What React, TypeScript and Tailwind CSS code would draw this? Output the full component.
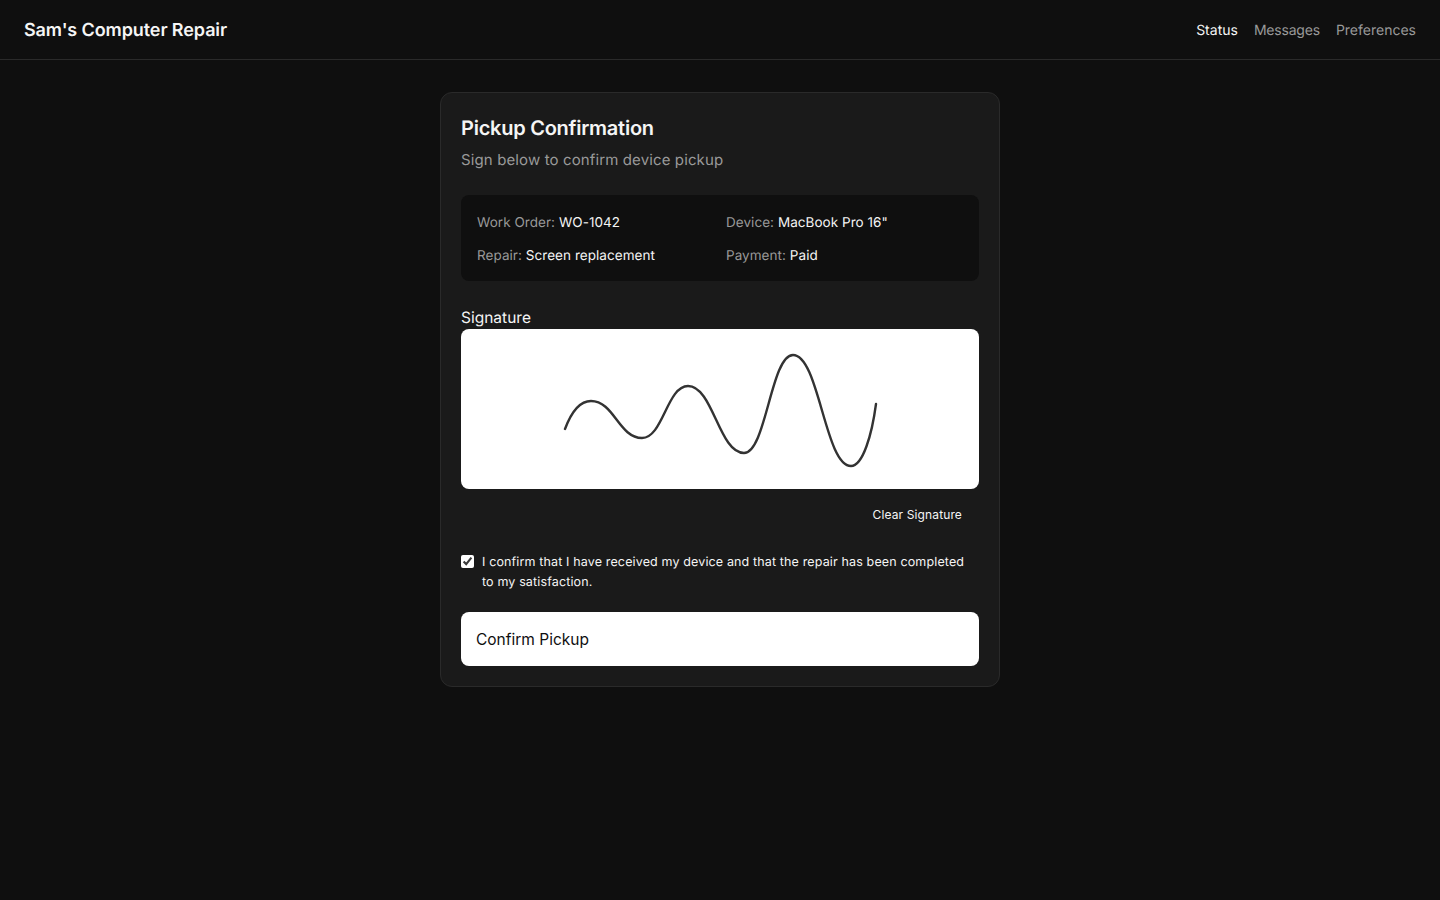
import { useState } from 'react';

const details = [
  { label: 'Work Order:', value: 'WO-1042' },
  { label: 'Device:', value: 'MacBook Pro 16"' },
  { label: 'Repair:', value: 'Screen replacement' },
  { label: 'Payment:', value: 'Paid' },
];

function Header() {
  return (
    <header className="flex h-[60px] items-center justify-between border-b border-[#2a2a2a] px-6 pt-[2px]">
      <h1 className="text-lg font-semibold tracking-[-0.1px] text-[#f5f5f5]">Sam's Computer Repair</h1>
      <nav className="flex gap-4 text-sm">
        <a className="text-[#f5f5f5]">Status</a>
        <a className="tracking-[-0.2px] text-[#999999]">Messages</a>
        <a className="text-[#999999]">Preferences</a>
      </nav>
    </header>
  );
}

function SignaturePad() {
  return (
    <div className="h-40 w-full overflow-hidden rounded-lg bg-white">
      <svg width="518" height="160" viewBox="0 0 518 160" fill="none">
        <path
          d="M104 100 C110 84 119 72 130 72 C153 72 158 109 181 109 C202 109 206 57 227 57 C252 57 258 124 283 124 C305 124 310 26 332 26 C358 26 364 137 390 137 C402 137 411 105 415 75"
          stroke="#333333"
          strokeWidth="2.4"
          strokeLinecap="round"
        />
      </svg>
    </div>
  );
}

export default function App() {
  const [confirmed, setConfirmed] = useState(true);

  return (
    <div className="min-h-screen bg-[#0f0f0f] font-['Inter',sans-serif] text-[#f5f5f5] [text-rendering:geometricPrecision]">
      <Header />
      <main className="mx-auto w-[560px] pt-8">
        <div className="rounded-xl border border-[#2a2a2a] bg-[#1a1a1a] p-5">
          <h2 className="text-xl font-semibold leading-[30px] tracking-[-0.25px] text-[#f5f5f5]">Pickup Confirmation</h2>
          <p className="mt-[5px] text-[15px] leading-6 tracking-[0.12px] text-[#999999]">Sign below to confirm device pickup</p>

          <div className="mt-[23px] grid grid-cols-2 gap-3 rounded-lg bg-[#0f0f0f] px-4 pt-[18px] pb-[14px] text-[13.5px] leading-[21px] tracking-[0.05px]">
            {details.map((d) => (
              <div key={d.label}>
                <span className="text-[#999999]">{d.label}</span> {d.value}
              </div>
            ))}
          </div>

          <label className="mt-[26px] block text-[15.5px] leading-[22px]">Signature</label>
          <SignaturePad />

          <div className="mt-2 flex justify-end">
            <button className="px-[17px] pt-[10px] pb-2 text-xs tracking-[0.13px] text-[#f5f5f5]">Clear Signature</button>
          </div>

          <label className="mt-[21px] flex items-start gap-2 text-[12.5px] leading-5 tracking-[0.14px]">
            <input
              type="checkbox"
              checked={confirmed}
              onChange={(e) => setConfirmed(e.target.checked)}
              className="mt-[3px] h-[13px] w-[13px] shrink-0 accent-white"
            />
            <span className="mt-px">I confirm that I have received my device and that the repair has been completed to my satisfaction.</span>
          </label>

          <button className="mt-[19px] h-[54px] w-full rounded-lg bg-white px-[15px] pt-[2px] text-left text-[15.5px] text-[#0f0f0f]">
            Confirm Pickup
          </button>
        </div>
      </main>
    </div>
  );
}
